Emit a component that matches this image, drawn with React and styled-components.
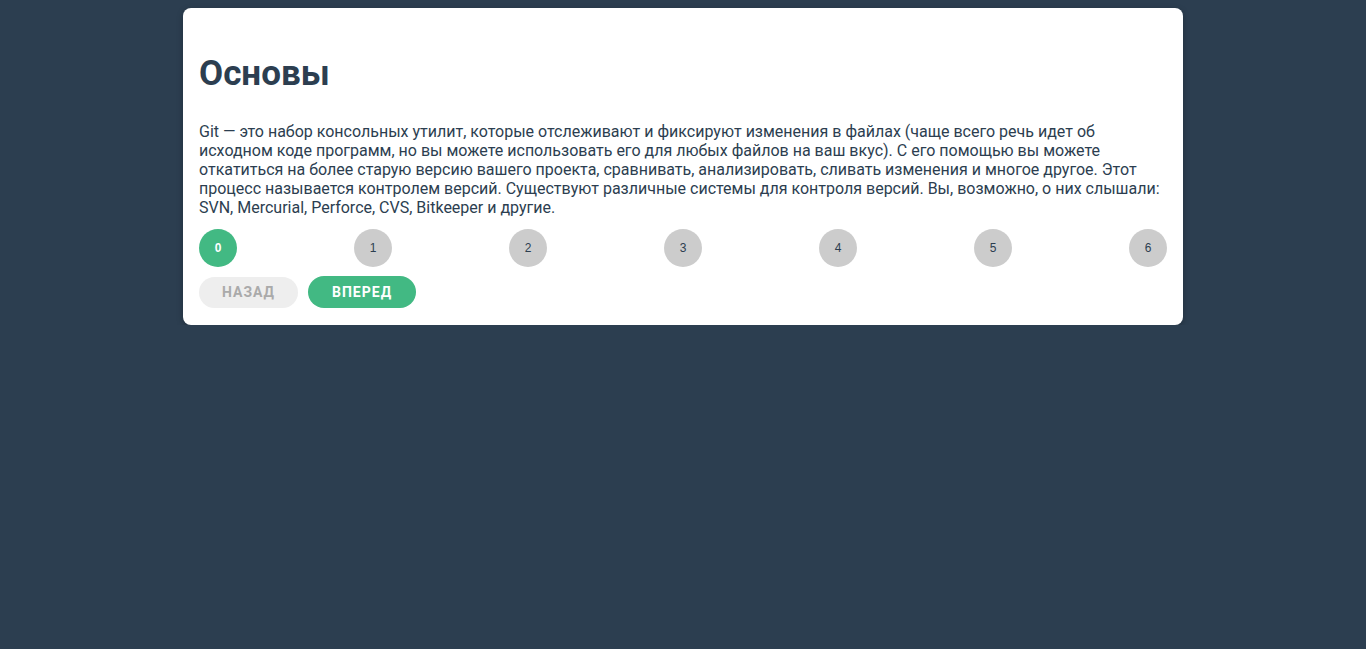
import React, { useState } from 'react';
import styled, { createGlobalStyle } from 'styled-components';

const GlobalStyle = createGlobalStyle`
  html, body {
    margin: 0;
    padding: 0;
    background: #2c3e50;
  }
  body {
    padding-top: 8px;
    font-family: Roboto, "Liberation Sans", Arial, sans-serif;
    color: #2c3e50;
  }
`;

const Card = styled.div`
  width: 1000px;
  box-sizing: border-box;
  margin: 0 auto;
  padding: 16px 16px 17px;
  background: #fff;
  border-radius: 8px;
  box-shadow: 0 2px 6px rgba(0, 0, 0, 0.25);
`;

const Title = styled.h1`
  margin: 29px 0 28px;
  font-size: 35px;
  font-weight: 700;
  line-height: normal;
  color: #2c3e50;
`;

const Text = styled.p`
  margin: 0;
  font-size: 16px;
  line-height: normal;
  color: #2c3e50;
`;

const Steps = styled.div`
  display: flex;
  justify-content: space-between;
  margin-top: 12px;
`;

const Step = styled.div`
  width: 38px;
  height: 38px;
  border-radius: 50%;
  display: flex;
  align-items: center;
  justify-content: center;
  font-family: "Liberation Sans", Arial, sans-serif;
  font-size: 12px;
  font-weight: ${(p) => (p.$active ? 700 : 400)};
  color: ${(p) => (p.$active ? '#fff' : '#2c3e50')};
  background: ${(p) => (p.$active ? '#42b983' : '#ccc')};
`;

const Actions = styled.div`
  display: flex;
  align-items: center;
  gap: 10px;
  margin-top: 9px;
`;

const Button = styled.button`
  height: ${(p) => (p.disabled ? '31px' : '32px')};
  padding: 0 ${(p) => (p.disabled ? '23px' : '24px')};
  border: none;
  border-radius: 16px;
  font-family: Roboto, "Liberation Sans", Arial, sans-serif;
  font-size: 14px;
  font-weight: 700;
  letter-spacing: 1px;
  text-transform: uppercase;
  color: ${(p) => (p.disabled ? '#aaa' : '#fff')};
  background: ${(p) => (p.disabled ? '#eee' : '#42b983')};
  cursor: ${(p) => (p.disabled ? 'default' : 'pointer')};
`;

const steps = [0, 1, 2, 3, 4, 5, 6];

export default function App() {
  const [current, setCurrent] = useState(0);

  return (
    <>
      <GlobalStyle />
      <Card>
        <Title>Основы</Title>
        <Text>
          Git — это набор консольных утилит, которые отслеживают и фиксируют изменения в файлах (чаще всего речь идет об
          исходном коде программ, но вы можете использовать его для любых файлов на ваш вкус). С его помощью вы можете
          откатиться на более старую версию вашего проекта, сравнивать, анализировать, сливать изменения и многое другое. Этот
          процесс называется контролем версий. Существуют различные системы для контроля версий. Вы, возможно, о них слышали:
          SVN, Mercurial, Perforce, CVS, Bitkeeper и другие.
        </Text>
        <Steps>
          {steps.map((n) => (
            <Step key={n} $active={n === current}>{n}</Step>
          ))}
        </Steps>
        <Actions>
          <Button disabled={current === 0} onClick={() => setCurrent(current - 1)}>Назад</Button>
          <Button onClick={() => setCurrent(Math.min(current + 1, steps.length - 1))}>Вперед</Button>
        </Actions>
      </Card>
    </>
  );
}
